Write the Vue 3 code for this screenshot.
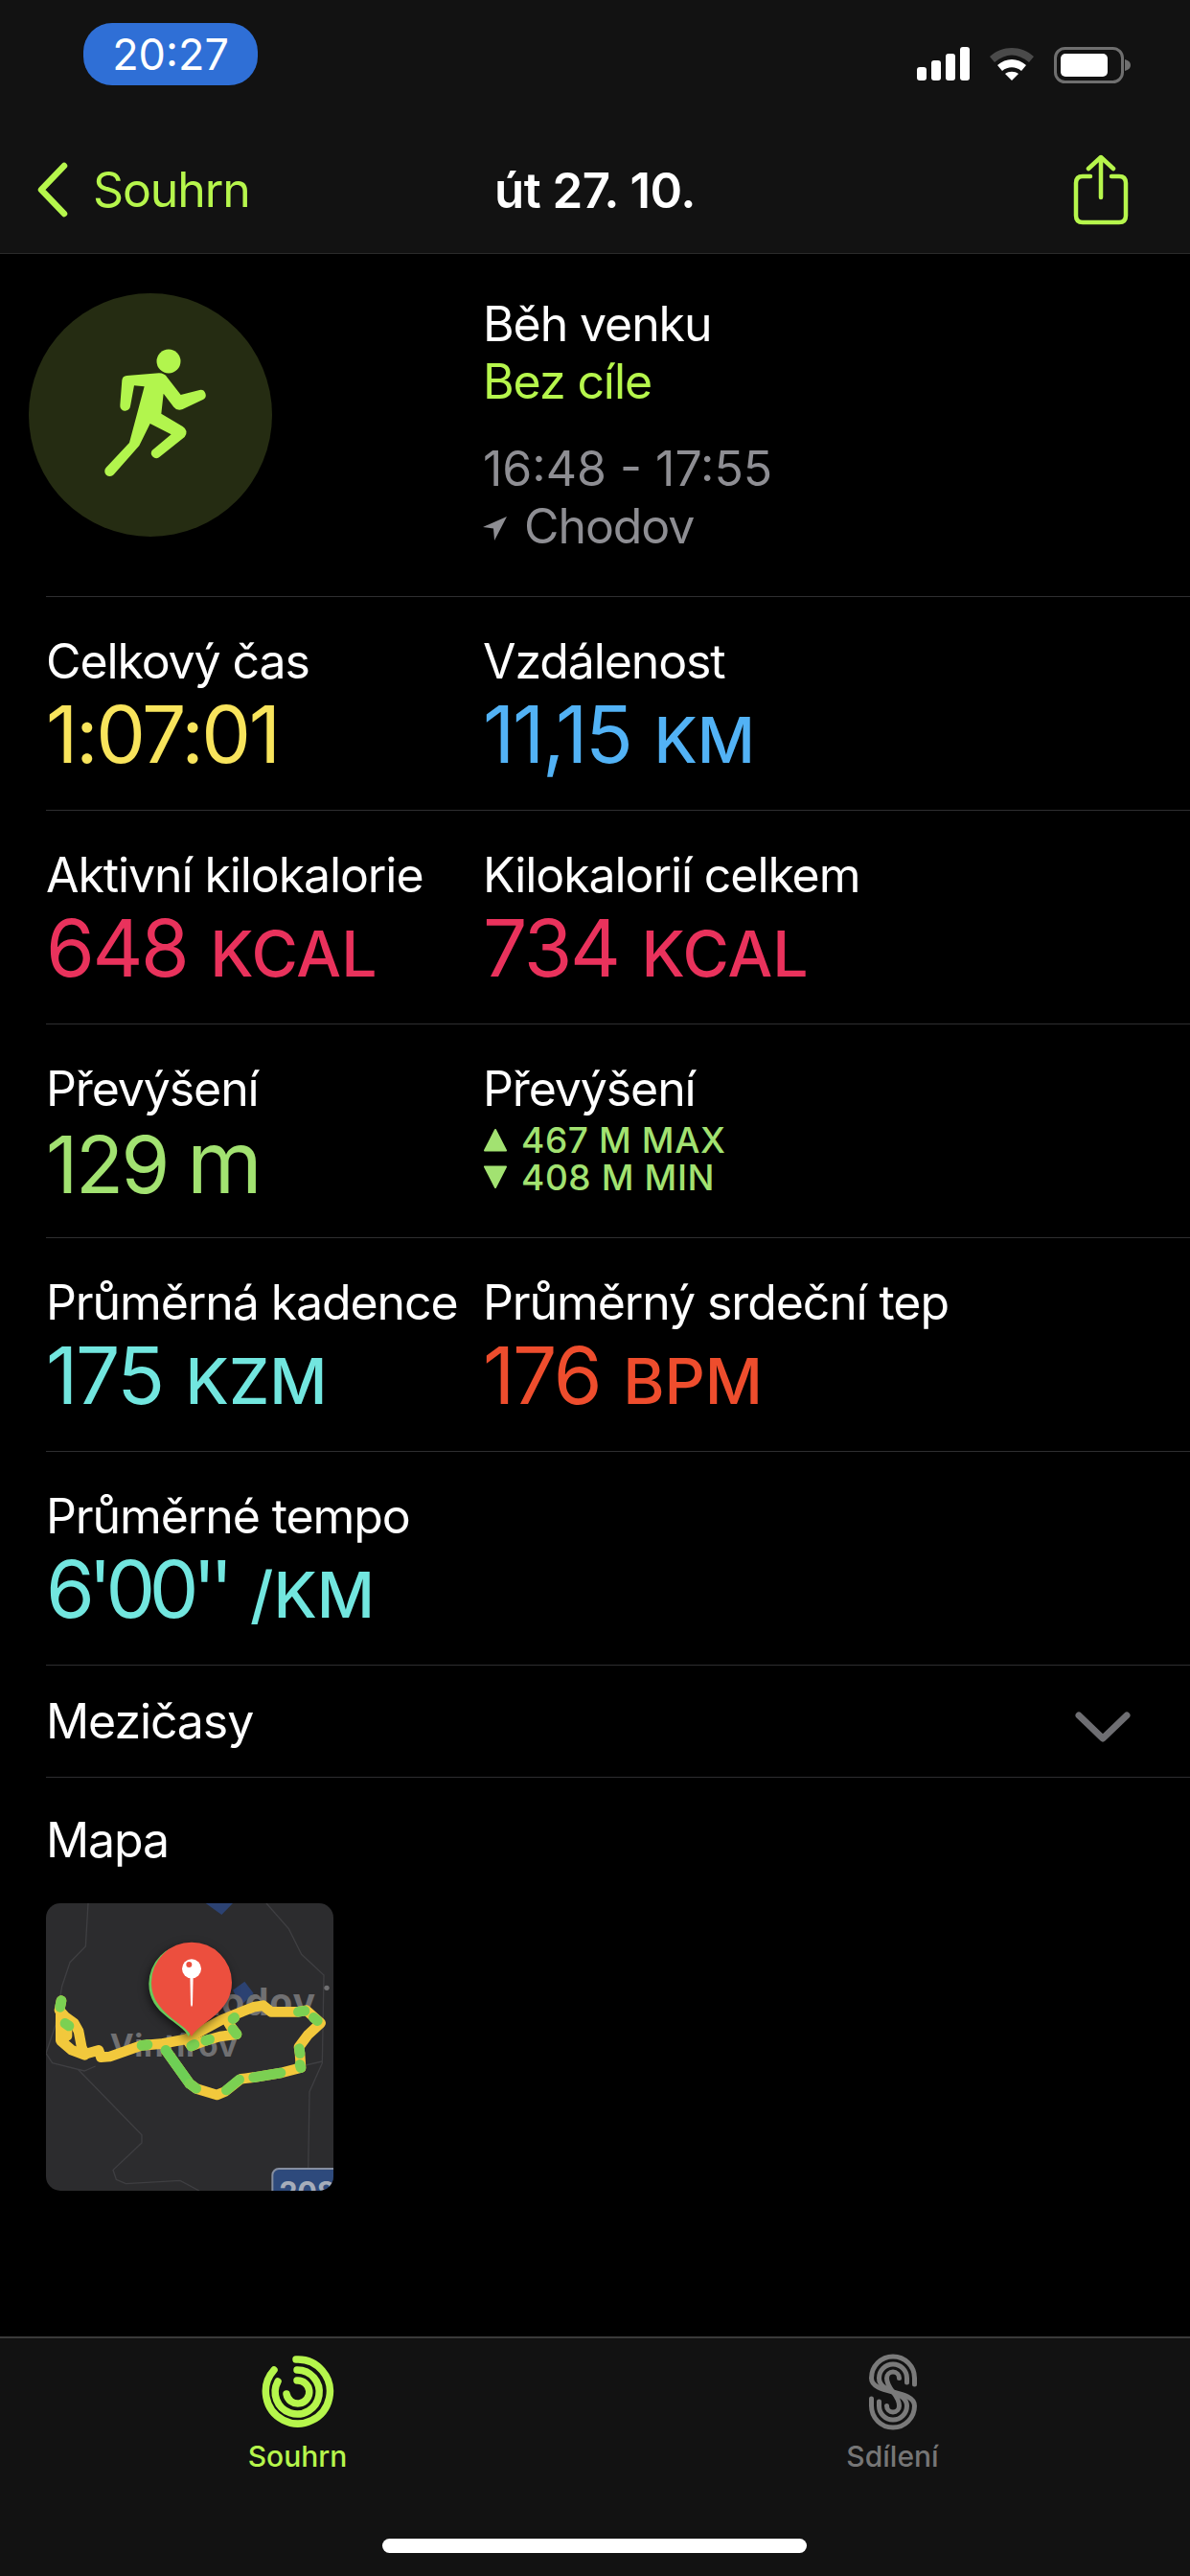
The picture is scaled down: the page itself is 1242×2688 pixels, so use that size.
<script setup>
const rows = [
  [
    { label: 'Celkový čas', value: '1:07:01', unit: '', color: '#f8e45c' },
    { label: 'Vzdálenost', value: '11,15', unit: 'KM', color: '#52b2f5' },
  ],
  [
    { label: 'Aktivní kilokalorie', value: '648', unit: 'KCAL', color: '#e9325c' },
    { label: 'Kilokalorií celkem', value: '734', unit: 'KCAL', color: '#e9325c' },
  ],
  [
    { label: 'Převýšení', value: '129', unit: 'm', color: '#a2e271', lower: true },
    { label: 'Převýšení', color: '#a2e271', range: ['467 M MAX', '408 M MIN'] },
  ],
  [
    { label: 'Průměrná kadence', value: '175', unit: 'KZM', color: '#72e6df' },
    { label: 'Průměrný srdeční tep', value: '176', unit: 'BPM', color: '#ee4d2d' },
  ],
  [{ label: 'Průměrné tempo', value: "6'00''", unit: '/KM', color: '#72e6df', tight: true }],
]

// route on the map, in a 900x900 box
const route = 'M48 305 L42 335 L60 355 L88 375 L102 400 L112 452 L122 472 L165 460 L172 482 L200 480 L300 445 L360 440 L440 425 L550 365 L600 345 L650 325 L680 320 L705 340 L790 340 L815 335 L860 375 L820 412 L792 450 L795 470 L798 515 L740 530 L650 545 L610 550 L560 590 L535 600 L470 580 L450 565 L375 460'
const routeInner = 'M440 425 L455 447 L500 430 L545 417 L597 410 L578 385 L570 372 L590 358'
const routeLeft = 'M46 340 L46 430 L81 460 L121 475 M46 380 L66 380 L66 415 L50 420'
const greenBits = [
  'M48 305 L44 325',
  'M60 376 L72 384',
  'M300 445 L318 443',
  'M455 447 L465 442',
  'M500 430 L512 426',
  'M597 410 L585 395',
  'M450 565 L470 580',
  'M565 585 L605 552',
  'M650 545 L735 531',
  'M798 515 L795 505',
  'M795 470 L793 455',
  'M790 340 L810 337',
  'M838 358 L850 368',
  'M590 358 L585 362',
]
</script>

<template>
  <div class="screen">
    <header class="top">
      <div class="status">
        <div class="clock">20:27</div>
        <div class="status-icons">
          <svg width="56" height="36" viewBox="0 0 56 36" fill="#fff">
            <rect x="1" y="21" width="10" height="14" rx="3" />
            <rect x="16" y="14" width="10" height="21" rx="3" />
            <rect x="31" y="7" width="10" height="28" rx="3" />
            <rect x="46" y="0" width="10" height="35" rx="3" />
          </svg>
          <svg width="48" height="36" viewBox="0 0 48 36">
            <path d="M1 10 C14 -2 34 -2 47 10 L42 16 C30 6 18 6 6 16 Z" fill="#4a4a4a" />
            <path d="M9 19 C18 11 30 11 39 19 L34 25 C28 20 20 20 14 25 Z" fill="#fff" />
            <path d="M17 28 C21 25 27 25 31 28 L24 35 Z" fill="#fff" />
          </svg>
          <svg width="80" height="38" viewBox="0 0 80 38">
            <rect x="1.5" y="1.5" width="70" height="35" rx="10" fill="none" stroke="#6f6f6f" stroke-width="3" />
            <rect x="7" y="7" width="49" height="24" rx="5" fill="#fff" />
            <path d="M74 13 C78 14 80 16 80 19 C80 22 78 24 74 25 Z" fill="#6f6f6f" />
          </svg>
        </div>
      </div>
      <nav class="navbar">
        <div class="back">
          <svg width="34" height="58" viewBox="0 0 34 58" fill="none" stroke="#b6f64c" stroke-width="6.5" stroke-linecap="round" stroke-linejoin="round">
            <path d="M29 4 L5 29 L29 54" />
          </svg>
          <span>Souhrn</span>
        </div>
        <div class="title">út 27. 10.</div>
        <svg class="share" width="58" height="74" viewBox="0 0 58 74" fill="none" stroke="#b6f64c" stroke-width="4.5" stroke-linecap="round" stroke-linejoin="round">
          <path d="M18 23 L10 23 Q3 23 3 30 L3 64 Q3 71 10 71 L48 71 Q55 71 55 64 L55 30 Q55 23 48 23 L40 23" />
          <path d="M29 45 L29 3 M16 15 L29 3 L42 15" />
        </svg>
      </nav>
    </header>

    <main class="content">
      <section class="summary">
        <div class="badge">
          <svg width="254" height="254" viewBox="0 0 254 254" fill="#b2f54d">
            <circle cx="146" cy="71" r="12.500" />
            <g transform="translate(70 44) scale(0.3333)">
              <path d="M76 218 L82 140 Q84 127 97 126 L198 118 Q215 118 224 132 L266 186 L325 171 A16 16 0 0 1 337 200 L272 231 Q255 238 244 224 L212 182 L205 245 L272 285 Q292 298 278 318 L198 382 A16 16 0 0 1 176 360 L236 310 L170 276 L136 345 L56 436 A16 16 0 0 1 32 414 L105 336 L152 160 L120 157 L108 222 A16 16 0 0 1 76 218 Z" />
            </g>
          </svg>
        </div>
        <div class="summary-text">
          <div class="white">Běh venku</div>
          <div class="accent">Bez cíle</div>
          <div class="grey times">16:48 - 17:55</div>
          <div class="grey place">
            <svg width="25" height="26" viewBox="0 0 25 26" fill="#8e8e93"><path d="M25 1 L0 12 L11 13.500 L12 26 Z" /></svg>
            <span>Chodov</span>
          </div>
        </div>
      </section>

      <section v-for="(row, i) in rows" :key="i" class="metric-row">
        <div v-for="m in row" :key="m.label + m.color" class="metric">
          <div class="label">{{ m.label }}</div>
          <div v-if="m.range" class="range" :style="{ color: m.color }">
            <div class="range-line">
              <svg width="26" height="25" viewBox="0 0 25 25" :fill="m.color" :stroke="m.color" stroke-width="2" stroke-linejoin="round"><path d="M12.500 2 L23.500 23.500 L1.500 23.500 Z" /></svg>
              <span>{{ m.range[0] }}</span>
            </div>
            <div class="range-line">
              <svg width="26" height="25" viewBox="0 0 25 25" :fill="m.color" :stroke="m.color" stroke-width="2" stroke-linejoin="round"><path d="M1.500 1.500 L23.500 1.500 L12.500 23 Z" /></svg>
              <span>{{ m.range[1] }}</span>
            </div>
          </div>
          <div v-else class="value" :style="{ color: m.color }">
            <span :class="{ tight: m.tight }">{{ m.value }}</span>
            <span v-if="m.unit" class="unit" :class="{ lower: m.lower }">{{ m.unit }}</span>
          </div>
        </div>
      </section>

      <section class="splits">
        <span>Mezičasy</span>
        <svg width="58" height="32" viewBox="0 0 58 32" fill="none" stroke="#6e6e72" stroke-width="7" stroke-linecap="round" stroke-linejoin="round">
          <path d="M4 4 L29 28 L54 4" />
        </svg>
      </section>

      <section class="map-block">
        <div class="map-title">Mapa</div>
        <div class="map">
          <svg width="300" height="300" viewBox="0 0 900 900">
            <g fill="none" stroke="#3f3f42" stroke-width="4">
              <path d="M132 0 L124 135 L75 185 L50 260 L30 380 L0 470" />
              <path d="M0 470 L20 500 L120 525 L155 510" />
              <path d="M100 520 L300 725 L300 750 L210 835 L220 865 L250 878 L420 868 L480 900" />
              <path d="M690 0 L760 80 L800 160 L870 225 L865 500 L825 590 L820 900" />
              <path d="M865 495 L800 510" />
            </g>
            <path d="M500 0 L550 36 L585 0 Z" fill="#2c4272" />
            <path d="M585 272 L622 245 L650 282 L610 320 Z" fill="#2c4272" />
            <text x="845" y="350" text-anchor="end" class="map-city big">Chodov</text>
            <circle cx="879" cy="265" r="8" fill="#707072" />
            <text x="200" y="480" class="map-city">Vintířov</text>
            <g transform="translate(706 828)">
              <rect x="3" y="3" width="240" height="120" rx="20" fill="#2e4a7c" stroke="#858ea0" stroke-width="6" />
              <text x="112" y="112" text-anchor="middle" class="road-no">208</text>
            </g>
            <g fill="none" stroke-linecap="round" stroke-linejoin="round" stroke-width="32">
              <path :d="routeLeft" stroke="#f2c83c" />
              <path :d="route" stroke="#f2c83c" />
              <path :d="routeInner" stroke="#f2c83c" />
              <path d="M375 460 L450 565" stroke="#6ecf55" />
              <path v-for="b in greenBits" :key="b" :d="b" stroke="#7bd052" />
            </g>
            <g class="pin">
              <path d="M446 417 C425 370 322 350 322 252 A124 124 0 0 1 570 252 C570 350 470 370 446 417 Z" fill="#66c95a" />
              <path d="M456 417 C435 372 330 345 330 248 A126 126 0 0 1 582 248 C582 345 478 372 456 417 Z" fill="#ec4f3e" />
              <circle cx="456" cy="205" r="30" fill="#fff" />
              <circle cx="448" cy="192" r="9" fill="#ec4f3e" />
              <path d="M451 225 L461 225 L459 318 L456 325 L453 318 Z" fill="#fff" />
            </g>
          </svg>
        </div>
      </section>
    </main>

    <footer class="tabbar">
      <div class="tabs">
        <div class="tab active">
          <svg width="80" height="80" viewBox="0 10 80 80" fill="none" stroke="#b6f64c" stroke-width="7.5" stroke-linecap="round">
            <path d="M38 16 A33.500 33.500 0 1 1 15 27" />
            <path d="M39 27 A23 23 0 1 1 19 39" />
            <path d="M39 38 A12 12 0 1 1 28 52" />
          </svg>
          <span>Souhrn</span>
        </div>
        <div class="tab">
          <svg width="50" height="80" viewBox="16 11 50 80" fill="none" stroke="#7a7a7a" stroke-width="5" stroke-linecap="round">
            <path d="M63.500 43 L63.500 36.500 A22.500 22.500 0 0 0 18.500 36.500 C18.500 54 63.500 48 63.500 65.500 A22.500 22.500 0 0 1 18.500 65.500 L18.500 58" />
            <path d="M55.500 41 L55.500 36.500 A14.500 14.500 0 0 0 26.500 36.500 C26.500 52 55.500 50 55.500 65.500 A14.500 14.500 0 0 1 26.500 65.500 L26.500 61" />
            <path d="M47.500 36.500 A6.500 6.500 0 0 0 34.500 36.500 C34.500 49 47.500 53 47.500 65.500 A6.500 6.500 0 0 1 34.500 65.500" />
          </svg>
          <span>Sdílení</span>
        </div>
      </div>
      <div class="home-bar"></div>
    </footer>
  </div>
</template>

<style scoped>
.screen {
  width: 1242px;
  height: 2688px;
  display: flex;
  flex-direction: column;
  background: #000;
  color: #fff;
  font-family: Inter, "Noto Sans", "Liberation Sans", sans-serif;
  font-size: 50px;
  letter-spacing: -1.1px;
  overflow: hidden;
}

.top {
  height: 265px;
  box-sizing: border-box;
  background: #121212;
  border-bottom: 1px solid #2b2b2b;
}

.status {
  height: 132px;
  display: flex;
  justify-content: space-between;
  padding: 24px 62px 0 87px;
  box-sizing: border-box;
}

.clock {
  width: 182px;
  height: 65px;
  border-radius: 30px;
  background: #2f6fd6;
  font-size: 45px;
  line-height: 65px;
  text-align: center;
  letter-spacing: 0;
}

.status-icons {
  display: flex;
  gap: 20px;
  padding-top: 25px;
  align-items: flex-start;
}

.navbar {
  height: 132px;
  position: relative;
  display: flex;
  align-items: center;
  justify-content: space-between;
  padding: 0 64px 0 38px;
}

.back {
  display: flex;
  align-items: center;
  gap: 25px;
  color: #b6f64c;
}

.title {
  position: absolute;
  left: 0;
  right: 0;
  text-align: center;
  font-weight: 600;
  font-size: 51px;
  letter-spacing: -0.5px;
  pointer-events: none;
}

.summary {
  height: 357px;
  box-sizing: border-box;
  display: flex;
  padding: 41px 0 0 30px;
}

.badge {
  width: 254px;
  height: 254px;
  border-radius: 50%;
  background: #252c12;
}

.summary-text {
  margin-left: 220px;
  line-height: 60px;
  position: relative;
  top: 2px;
}

.accent {
  color: #b6f64c;
}

.grey {
  color: #8e8e93;
}

.times {
  margin-top: 31px;
  letter-spacing: 0;
}

.place {
  display: flex;
  align-items: center;
  gap: 18px;
}

.place svg {
  margin-top: 4px;
}

.metric-row {
  height: 223px;
  box-sizing: border-box;
  margin-left: 48px;
  border-top: 1px solid #2e2e30;
  display: flex;
  padding-top: 36px;
}

.metric {
  width: 456px;
  white-space: nowrap;
}

.label {
  line-height: 62px;
}

.value {
  display: flex;
  align-items: baseline;
  gap: 24px;
  font-size: 82px;
  line-height: 92px;
  letter-spacing: -2.4px;
}

.tight {
  letter-spacing: -6.5px;
}

.unit {
  font-size: 66px;
  font-weight: 500;
  letter-spacing: 0;
}

.unit.lower {
  font-size: 90px;
  font-weight: 400;
  margin-left: -4px;
}

.range {
  font-size: 37px;
  font-weight: 500;
  letter-spacing: 0.6px;
  line-height: 39px;
  padding-top: 3px;
}

.range-line {
  display: flex;
  align-items: center;
  gap: 14px;
  height: 39px;
}

.splits {
  height: 118px;
  box-sizing: border-box;
  margin-left: 48px;
  padding: 0 62px 0 0;
  border-top: 1px solid #2e2e30;
  border-bottom: 1px solid #2e2e30;
  display: flex;
  align-items: center;
  justify-content: space-between;
}

.splits svg {
  margin-top: 12px;
}

.map-block {
  padding: 34px 0 0 48px;
}

.map-title {
  line-height: 62px;
}

.map {
  width: 300px;
  height: 300px;
  margin-top: 35px;
  border-radius: 15px;
  overflow: hidden;
  background: #2c2c2e;
}

.map svg {
  display: block;
}

.map-city {
  font-size: 100px;
  font-weight: 700;
  fill: #707072;
  letter-spacing: 2px;
}

.map-city.big {
  font-size: 118px;
}

.road-no {
  font-size: 92px;
  font-weight: 700;
  fill: #a6adba;
}

.pin {
  filter: drop-shadow(-4px 10px 14px rgba(0, 0, 0, 0.55));
}

.content {
  flex: 1;
}

.tabbar {
  height: 250px;
  box-sizing: border-box;
  background: #121212;
  border-top: 2px solid #3a3a3a;
  position: relative;
}

.tabs {
  display: flex;
  padding-top: 16px;
}

.tab {
  width: 621px;
  display: flex;
  flex-direction: column;
  align-items: center;
  color: #767676;
  font-size: 30px;
  font-weight: 500;
  letter-spacing: 0;
  line-height: 36px;
  gap: 9px;
}

.tab.active {
  color: #b6f64c;
}

.home-bar {
  position: absolute;
  left: 399px;
  bottom: 24px;
  width: 443px;
  height: 15px;
  border-radius: 8px;
  background: #fff;
}
</style>

<style>
html, body {
  background: #000;
}
</style>
